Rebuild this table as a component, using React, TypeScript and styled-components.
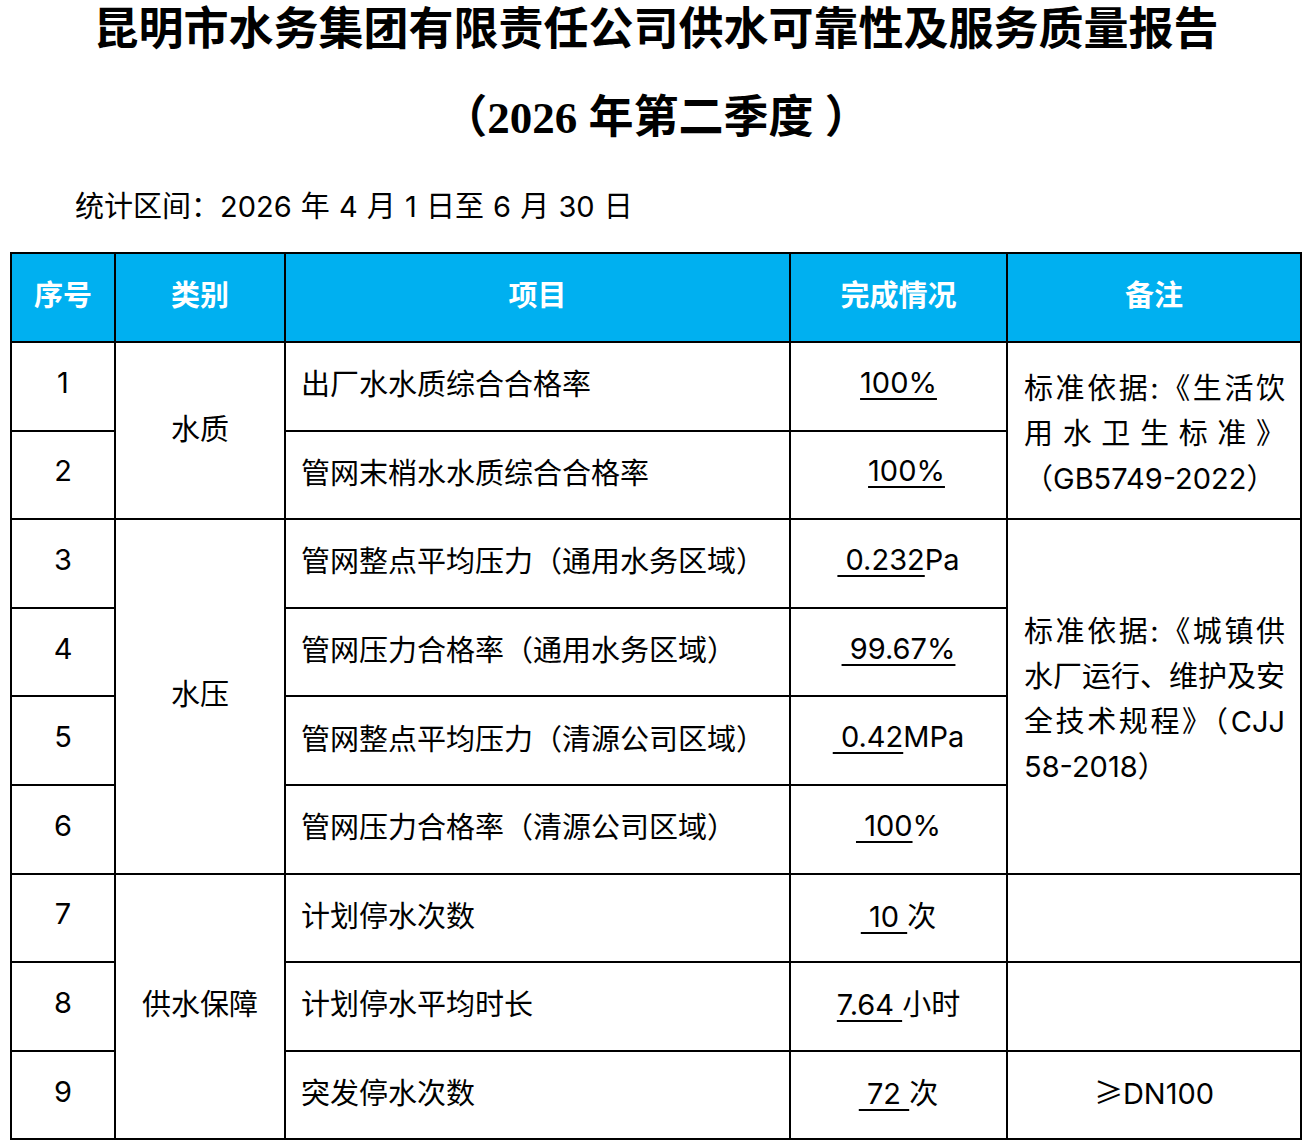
import styled, { createGlobalStyle } from "styled-components";

const GlobalStyle = createGlobalStyle`
  html, body {
    margin: 0;
    padding: 0;
    background: #ffffff;
  }
  body {
    font-family: "Inter", "Noto Sans CJK SC", sans-serif;
    color: #000000;
  }
`;

const Page = styled.div`
  width: 1312px;
  height: 1140px;
  overflow: hidden;
  display: flex;
  flex-direction: column;
`;

const Title = styled.h1`
  margin: 0;
  font-family: "Liberation Serif", "Noto Sans CJK SC", serif;
  font-size: 45px;
  font-weight: 700;
  line-height: 60px;
  text-align: center;
  white-space: pre;
`;

const SubTitle = styled(Title)`
  margin-top: 28px;
`;

const Period = styled.div`
  margin: 39px 0 0 75px;
  font-size: 29px;
  word-spacing: 1px;
  line-height: 40px;
`;

const Table = styled.table`
  margin: 25px 0 0 10px;
  width: 1290px;
  table-layout: fixed;
  border-collapse: collapse;
  border: 2px solid #000;
`;

const Col = styled.col<{ $w: number }>`
  width: ${(p) => p.$w}px;
`;

const Head = styled.th`
  height: 77px;
  padding: 0 0 10px;
  background: #00b0f0;
  color: #ffffff;
  font-family: "Noto Sans CJK SC", sans-serif;
  font-size: 29px;
  font-weight: 700;
  text-align: center;
  border: 2px solid #000;
`;

const Cell = styled.td<{ $align?: "left" | "center" }>`
  height: 78.6px;
  padding: 0 ${(p) => (p.$align === "left" ? "15px" : "0")} 8px;
  font-size: 29px;
  text-align: ${(p) => p.$align || "center"};
  vertical-align: middle;
  border: 2px solid #000;
`;

const Value = styled.span<{ $shift?: number }>`
  white-space: pre;
  padding-left: ${(p) => p.$shift || 0}px;
`;

const Marked = styled.span`
  white-space: pre;
  text-decoration: underline;
  text-decoration-thickness: 2px;
  text-underline-offset: 5px;
`;

const Sign = styled.span`
  font-family: "Noto Sans CJK SC", sans-serif;
`;

const Remark = styled.td`
  padding: 6px 15px 0 16px;
  font-size: 29px;
  line-height: 45px;
  vertical-align: middle;
  border: 2px solid #000;
`;

const RemarkLine = styled.div<{ $last?: boolean }>`
  white-space: nowrap;
  text-align: ${(p) => (p.$last ? "left" : "justify")};
  text-align-last: ${(p) => (p.$last ? "left" : "justify")};
`;

type Row = {
  no: number;
  item: string;
  marked: string;
  rest?: string;
  shift?: number;
};

const rows: Row[] = [
  { no: 1, item: "出厂水水质综合合格率", marked: "100%" },
  { no: 2, item: "管网末梢水水质综合合格率", marked: "100%", shift: 16 },
  { no: 3, item: "管网整点平均压力（通用水务区域）", marked: " 0.232", rest: "Pa" },
  { no: 4, item: "管网压力合格率（通用水务区域）", marked: " 99.67%" },
  { no: 5, item: "管网整点平均压力（清源公司区域）", marked: " 0.42", rest: "MPa" },
  { no: 6, item: "管网压力合格率（清源公司区域）", marked: " 100", rest: "%" },
  { no: 7, item: "计划停水次数", marked: " 10 ", rest: "次" },
  { no: 8, item: "计划停水平均时长", marked: "7.64 ", rest: "小时" },
  { no: 9, item: "突发停水次数", marked: " 72 ", rest: "次" },
];

const categories: Record<number, { name: string; span: number }> = {
  1: { name: "水质", span: 2 },
  3: { name: "水压", span: 4 },
  7: { name: "供水保障", span: 3 },
};

const remarks: Record<number, { lines: string[]; span: number }> = {
  1: {
    span: 2,
    lines: ["标准依据:《生活饮", "用水卫生标准》", "（GB5749-2022）"],
  },
  3: {
    span: 4,
    lines: ["标准依据:《城镇供", "水厂运行、维护及安", "全技术规程》（CJJ", "58-2018）"],
  },
  7: { span: 1, lines: [] },
  8: { span: 1, lines: [] },
};

const App = () => {
  return (
    <Page>
      <GlobalStyle />
      <Title>昆明市水务集团有限责任公司供水可靠性及服务质量报告</Title>
      <SubTitle>（2026 年第二季度 ）</SubTitle>
      <Period>统计区间：2026 年 4 月 1 日至 6 月 30 日</Period>
      <Table>
        <colgroup>
          <Col $w={104} />
          <Col $w={170} />
          <Col $w={505} />
          <Col $w={217} />
          <Col $w={294} />
        </colgroup>
        <thead>
          <tr>
            <Head>序号</Head>
            <Head>类别</Head>
            <Head>项目</Head>
            <Head>完成情况</Head>
            <Head>备注</Head>
          </tr>
        </thead>
        <tbody>
          {rows.map((row) => {
            const cat = categories[row.no];
            const remark = remarks[row.no];
            return (
              <tr key={row.no}>
                <Cell>{row.no}</Cell>
                {cat && <Cell rowSpan={cat.span}>{cat.name}</Cell>}
                <Cell $align="left">{row.item}</Cell>
                <Cell>
                  <Value $shift={row.shift}>
                    <Marked>{row.marked}</Marked>
                    {row.rest}
                  </Value>
                </Cell>
                {remark && (
                  <Remark rowSpan={remark.span}>
                    {remark.lines.map((line, i) => (
                      <RemarkLine key={line} $last={i === remark.lines.length - 1}>
                        {line}
                      </RemarkLine>
                    ))}
                  </Remark>
                )}
                {row.no === 9 && (
                  <Cell>
                    <Sign>≥</Sign>DN100
                  </Cell>
                )}
              </tr>
            );
          })}
        </tbody>
      </Table>
    </Page>
  );
};

export default App;
